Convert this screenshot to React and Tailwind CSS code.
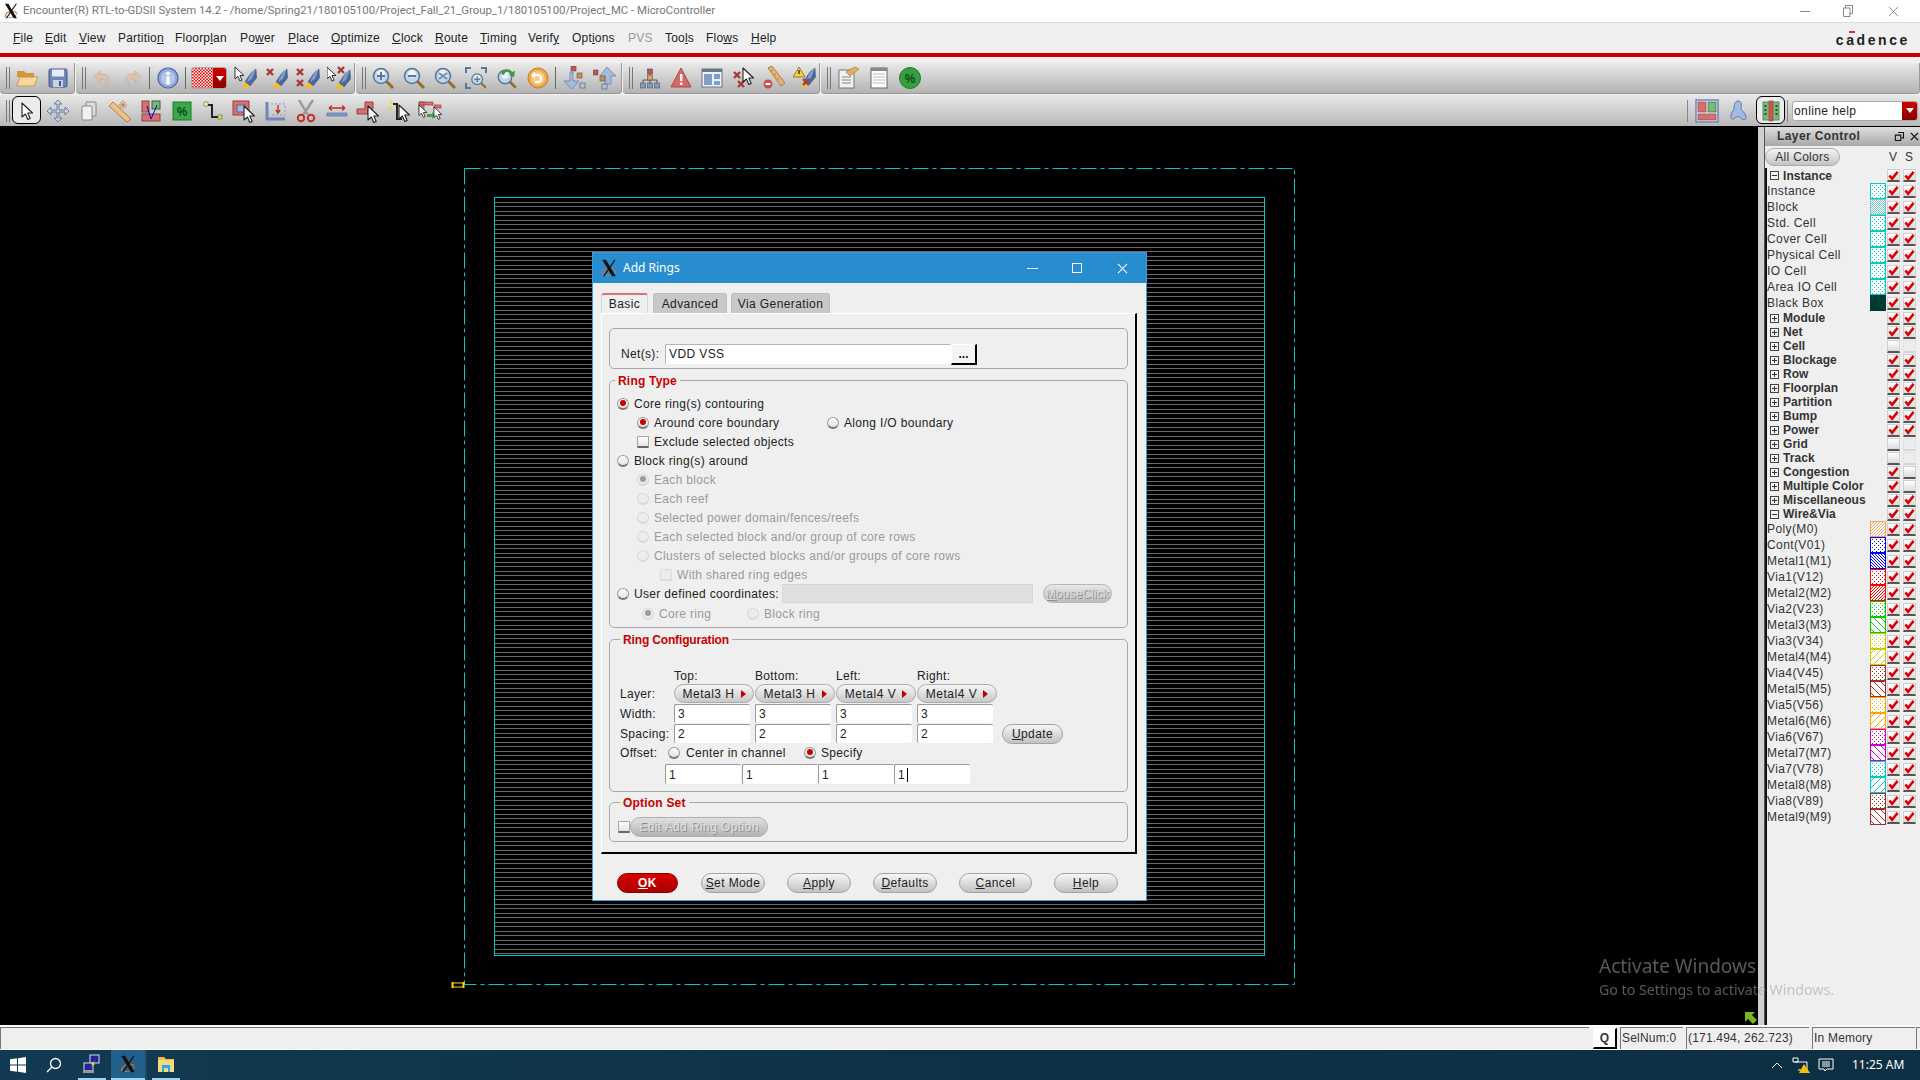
const Ic = ({ children, size = 'w-6 h-6' }) => (
  <svg viewBox="0 0 24 24" className={size}>{children}</svg>
);

const Arrow = ({ x = 0, y = 0, s = 1 }) => (
  <polygon
    transform={`translate(${x} ${y}) scale(${s})`}
    points="0,0 0,14 3.4,11 5.8,16.5 8.2,15.5 5.8,10 10.5,10"
    fill="#fff"
    stroke="#222"
    strokeWidth="1.1"
    strokeLinejoin="round"
  />
);

const Pen = ({ x = 0, y = 0 }) => (
  <g transform={`translate(${x} ${y})`}>
    <polygon points="14,0 14.500,9 8,17 3,13 9,4" fill="#4a6a9e" stroke="#2d4468" strokeWidth="0.5" />
    <polygon points="9,4 14,0 10,10 5,13" fill="#7f9ccb" />
    <polygon points="3,13 8,17 0,20" fill="#f4c20d" />
  </g>
);

const RedX = ({ x = 0, y = 0 }) => (
  <g transform={`translate(${x} ${y})`} stroke="#a83a3a" strokeWidth="2.4">
    <line x1="0" y1="0" x2="6" y2="6" />
    <line x1="6" y1="0" x2="0" y2="6" />
  </g>
);

const Glass = ({ sign }) => (
  <g>
    <line x1="15" y1="15" x2="22" y2="22" stroke="#9a6a2c" strokeWidth="3" />
    <circle cx="10" cy="10" r="7.5" fill="#c3d5e8" stroke="#5b7898" strokeWidth="1.6" />
    <circle cx="10" cy="8" r="4" fill="#edf3f9" />
    {sign === 'plus' && <path d="M6 10h8M10 6v8" stroke="#5b7898" strokeWidth="2" />}
    {sign === 'minus' && <path d="M6 10h8" stroke="#5b7898" strokeWidth="2" />}
    {sign === 'fit' && <path d="M6 7l8 6M14 7l-8 6" stroke="#6f8db0" strokeWidth="1.8" />}
  </g>
);

const Node = ({ x, y, c = '#d98c4a' }) => (
  <rect x={x} y={y} width="5" height="5" fill={c} stroke="#555" strokeWidth="0.6" />
);

const XLogo = ({ size = 'w-4 h-4' }) => (
  <svg viewBox="0 0 24 24" className={size}>
    <path d="M3 21C5 12 14 10 21 15" fill="none" stroke="#d4672a" strokeWidth="1.6" />
    <path d="M4 21C8 23 18 22 21 16" fill="none" stroke="#a88a5a" strokeWidth="1.2" />
    <polygon points="3,1 8,1 21,23 16,23" fill="#111" />
    <polygon points="19,1 21,1 6,23 4,23" fill="#111" />
  </svg>
);

const toolbarIcons = {
  folder: (
    <Ic>
      <path d="M2 5h7l2 2h8v4H2z" fill="#d8943c" />
      <polygon points="5,11 23,11 19,20 2,20" fill="#f6d79c" stroke="#c98b3a" strokeWidth="0.8" />
    </Ic>
  ),
  save: (
    <Ic>
      <rect x="3" y="3" width="18" height="18" rx="1.5" fill="#6f86b8" stroke="#3f5486" />
      <rect x="6" y="3.5" width="12" height="7" fill="#e7ebf3" />
      <rect x="7" y="14" width="10" height="7" fill="#c9d2e3" />
      <rect x="13" y="15" width="2" height="5" fill="#3f5486" />
    </Ic>
  ),
  undo: (
    <Ic>
      <path d="M9 8h3c4 0 6 2.500 6 6 0 2-1 4-3 6 .5-4-.5-7-4-7H9v4L3 10.500 9 5z" fill="#d9c4ae" stroke="#bfa78f" strokeWidth="0.6" />
    </Ic>
  ),
  redo: (
    <Ic>
      <path d="M15 8h-3c-4 0-6 2.500-6 6 0 2 1 4 3 6-.5-4 .5-7 4-7h2v4l6-6.500L15 5z" fill="#d9c4ae" stroke="#bfa78f" strokeWidth="0.6" />
    </Ic>
  ),
  info: (
    <Ic>
      <circle cx="12" cy="12" r="10" fill="#8ea8dc" stroke="#4a68a8" strokeWidth="1.2" />
      <circle cx="12" cy="12" r="7" fill="#b5c8ec" />
      <circle cx="12" cy="7.500" r="1.800" fill="#fff" />
      <rect x="10.500" y="10.500" width="3" height="8" fill="#fff" />
    </Ic>
  ),
  penArrow: (
    <Ic>
      <Arrow x={1} y={1} s={0.85} />
      <Pen x={8} y={3} />
    </Ic>
  ),
  penX: (
    <Ic>
      <RedX x={2} y={3} />
      <Pen x={8} y={3} />
    </Ic>
  ),
  penXX: (
    <Ic>
      <RedX x={1} y={3} />
      <RedX x={1} y={14} />
      <Pen x={9} y={3} />
    </Ic>
  ),
  penArrowX: (
    <Ic>
      <Arrow x={0} y={1} s={0.85} />
      <RedX x={11} y={1} />
      <Pen x={9} y={4} />
    </Ic>
  ),
  zoomIn: <Ic><Glass sign="plus" /></Ic>,
  zoomOut: <Ic><Glass sign="minus" /></Ic>,
  zoomFit: <Ic><Glass sign="fit" /></Ic>,
  zoomArea: (
    <Ic>
      <path d="M2 7V2h5M17 2h5v5M2 17v5h5" fill="none" stroke="#5b7898" strokeWidth="2" />
      <g transform="translate(6 6) scale(0.72)"><Glass sign="plus" /></g>
    </Ic>
  ),
  zoomBack: (
    <Ic>
      <g transform="translate(1 2) scale(0.9)"><Glass /></g>
      <path d="M6 8C8 2 15 2 17 6l3-1-1 6-5-2 2-1C14 5 10 5 9 9z" fill="#3f9a3f" />
    </Ic>
  ),
  refresh: (
    <Ic>
      <circle cx="12" cy="12" r="10" fill="#eda84a" stroke="#c47a1e" />
      <circle cx="12" cy="12" r="7" fill="#f6ca88" />
      <path d="M8 9h4c4 0 4 7 0 7H9" fill="none" stroke="#fff" strokeWidth="2" />
      <polygon points="9,5 9,13 5,9" fill="#fff" />
    </Ic>
  ),
  hierDown: (
    <Ic>
      <Node x={9} y={0} c="#c85050" />
      <Node x={15} y={7} />
      <polygon points="8,6 11,6 11,15 17,15 9.500,23 2,15 8,15" fill="#a4bbd9" stroke="#6a87ad" strokeWidth="0.8" />
      <Node x={18} y={17} c="#a8c4e4" />
    </Ic>
  ),
  hierUp: (
    <Ic>
      <Node x={0} y={4} c="#c85050" />
      <polygon points="14,1 23,10 18,10 18,18 12,18 12,10 7,10" fill="#a4bbd9" stroke="#6a87ad" strokeWidth="0.8" />
      <Node x={7} y={10} />
      <Node x={9} y={18} c="#a8c4e4" />
    </Ic>
  ),
  tree: (
    <Ic>
      <path d="M12 8v4M5 18v-4h14v4M12 14v4" fill="none" stroke="#555" />
      <Node x={9.500} y={3} c="#c85050" />
      <Node x={9.500} y={9} c="#e0a060" />
      <Node x={2.500} y={17} c="#7f9ccb" />
      <Node x={9.500} y={17} c="#7f9ccb" />
      <Node x={16.500} y={17} c="#7f9ccb" />
    </Ic>
  ),
  warnRed: (
    <Ic>
      <polygon points="12,2 22,21 2,21" fill="#d76868" stroke="#b04848" strokeLinejoin="round" />
      <rect x="11" y="8" width="2.400" height="7" fill="#fff" />
      <rect x="11" y="16.500" width="2.400" height="2.400" fill="#fff" />
    </Ic>
  ),
  layout: (
    <Ic>
      <rect x="2" y="3" width="20" height="18" fill="#eef1f6" stroke="#6a7788" />
      <rect x="2" y="3" width="20" height="3" fill="#6a7788" />
      <rect x="4" y="8" width="8" height="11" fill="#7f9ccb" />
      <rect x="14" y="8" width="6" height="5" fill="#7f9ccb" />
      <rect x="14" y="15" width="6" height="4" fill="#7f9ccb" />
    </Ic>
  ),
  arrowXX: (
    <Ic>
      <RedX x={3} y={6} />
      <RedX x={7} y={15} />
      <Arrow x={12} y={2} />
    </Ic>
  ),
  rulerStop: (
    <Ic>
      <polygon points="6,2 10,0 23,17 19,20" fill="#e3b378" stroke="#b87a3a" />
      <path d="M9 5l2-1M12 9l2-1M15 13l2-1" stroke="#b87a3a" />
      <circle cx="6" cy="18" r="4.500" fill="#c85050" />
      <rect x="3.500" y="17" width="5" height="2" fill="#fff" />
    </Ic>
  ),
  warnPen: (
    <Ic>
      <polygon points="6,1 12,11 0,11" fill="#f4d03f" stroke="#8a6d00" strokeWidth="0.8" />
      <rect x="5.400" y="4" width="1.300" height="4" fill="#222" />
      <Pen x={8} y={2} />
      <RedX x={10} y={13} />
    </Ic>
  ),
  noteEdit: (
    <Ic>
      <rect x="3" y="4" width="15" height="18" fill="#f1f1f1" stroke="#777" />
      <path d="M6 11h9M6 14h9M6 17h9" stroke="#888" />
      <polygon points="10,6 19,1 23,3 14,10" fill="#e0b060" stroke="#a87a30" strokeWidth="0.7" />
    </Ic>
  ),
  notepad: (
    <Ic>
      <rect x="4" y="2" width="16" height="20" fill="#fff" stroke="#666" />
      <rect x="4" y="2" width="16" height="3" fill="#888" />
      <path d="M6 8h12M6 11h12M6 14h12M6 17h12" stroke="#bbb" />
    </Ic>
  ),
  greenPct: (
    <Ic>
      <circle cx="12" cy="12" r="10.500" fill="#36a040" stroke="#217a2a" />
      <text x="12" y="16.500" textAnchor="middle" fontSize="12" fontWeight="700" fill="#0d4d14" fontFamily="Liberation Sans">%</text>
    </Ic>
  ),
  select: <Ic><Arrow x={7} y={4} /></Ic>,
  move: (
    <Ic>
      <path d="M12 1l4 4h-3v6h6V8l4 4-4 4v-3h-6v6h3l-4 4-4-4h3v-6H5v3l-4-4 4-4v3h6V5H8z" fill="#c6d5e6" stroke="#5b7898" strokeWidth="0.9" />
    </Ic>
  ),
  copy: (
    <Ic>
      <rect x="9" y="3" width="10" height="14" rx="1" fill="#ddd" stroke="#888" />
      <rect x="5" y="7" width="10" height="14" rx="1" fill="#f0f0f0" stroke="#888" />
    </Ic>
  ),
  ruler: (
    <Ic>
      <polygon points="1,7 5,3 23,20 19,23" fill="#ecc28f" stroke="#c07a35" />
      <path d="M15 1v9M10 6h9M12 3l6 6M18 3l-6 6" stroke="#c07a35" strokeWidth="0.8" />
    </Ic>
  ),
  redGreenV: (
    <Ic>
      <rect x="3" y="2" width="7" height="11" fill="#d87070" stroke="#904040" />
      <rect x="13" y="2" width="8" height="8" fill="#78b878" stroke="#306030" />
      <rect x="3" y="15" width="18" height="7" fill="#d87070" stroke="#904040" />
      <path d="M8 7l4 13 6-14" fill="none" stroke="#0000e0" strokeWidth="1" />
    </Ic>
  ),
  greenBox: (
    <Ic>
      <rect x="3" y="3" width="18" height="18" fill="#38a848" stroke="#1e7a2c" />
      <text x="12" y="16.500" textAnchor="middle" fontSize="12" fontWeight="700" fill="#0d4d14" fontFamily="Liberation Sans">%</text>
    </Ic>
  ),
  wire: (
    <Ic>
      <path d="M7 6h4v12h6" fill="none" stroke="#222" strokeWidth="2" />
      <rect x="3" y="3" width="4" height="4" fill="#f6f3a0" stroke="#666" strokeWidth="0.6" />
      <rect x="17" y="16" width="4" height="4" fill="#e6dc40" stroke="#666" strokeWidth="0.6" />
    </Ic>
  ),
  boxArrow: (
    <Ic>
      <rect x="1" y="2" width="16" height="14" fill="#d87070" stroke="#904040" />
      <rect x="5" y="6" width="8" height="7" fill="#a9b9d6" stroke="#4a68a8" />
      <Arrow x={12} y={7} />
    </Ic>
  ),
  corner: (
    <Ic>
      <path d="M4 3v17h18" fill="none" stroke="#6f86b8" strokeWidth="3" />
      <path d="M8 5h14v11H8" fill="none" stroke="#7f9ccb" strokeDasharray="2 2" />
      <path d="M15 6v8M13 11l2 3 2-3" stroke="#c03030" fill="none" strokeWidth="1.400" />
    </Ic>
  ),
  scissors: (
    <Ic>
      <path d="M5 1l9 15M19 1L9 16" stroke="#999" strokeWidth="2.400" />
      <circle cx="7" cy="19" r="3.200" fill="none" stroke="#c03030" strokeWidth="2" />
      <circle cx="17" cy="19" r="3.200" fill="none" stroke="#c03030" strokeWidth="2" />
    </Ic>
  ),
  spread: (
    <Ic>
      <path d="M4 9h16M4 9l3-2.500M4 9l3 2.500M20 9l-3-2.500M20 9l-3 2.500" fill="none" stroke="#c03030" strokeWidth="1.400" />
      <rect x="2" y="14" width="20" height="3" fill="#7f9ccb" stroke="#4a68a8" strokeWidth="0.6" />
    </Ic>
  ),
  shapeArrow: (
    <Ic>
      <path d="M1 10h8V3h8v7h-5v5H1z" fill="#d87070" stroke="#904040" />
      <Arrow x={12} y={7} />
    </Ic>
  ),
  wireArrow: (
    <Ic>
      <path d="M6 5h4v15h5" fill="none" stroke="#222" strokeWidth="2" />
      <rect x="3" y="2" width="3" height="3" fill="#e6dc40" />
      <rect x="2" y="8" width="3" height="3" fill="#e6dc40" />
      <Arrow x={12} y={6} />
    </Ic>
  ),
  copyArrow: (
    <Ic>
      <path d="M1 3h14v3H1zM1 3h5v9H1zM16 6h7v3h-7z" fill="#d87070" stroke="#904040" strokeWidth="0.7" />
      <Arrow x={1} y={6} s={0.75} />
      <path d="M9 15h5v-2l3 3.500-3 3.500v-2H9z" fill="#38a848" />
      <Arrow x={16} y={8} s={0.75} />
    </Ic>
  ),
  panelsRed: (
    <Ic>
      <rect x="1" y="1" width="22" height="22" fill="#dfe6f0" stroke="#6f86b8" strokeWidth="1.500" />
      <rect x="3" y="3" width="8" height="10" fill="#d87070" stroke="#904040" strokeWidth="0.6" />
      <rect x="13" y="3" width="8" height="10" fill="#78b878" stroke="#306030" strokeWidth="0.6" />
      <rect x="3" y="15" width="18" height="6" fill="#d87070" stroke="#904040" strokeWidth="0.6" />
    </Ic>
  ),
  blob: (
    <Ic>
      <path d="M12 2c3 0 4 3 3 6s5 6 5 10-4 3-5 1-4-2-6 0-5 1-4-3 3-4 3-7 1-7 4-7z" fill="#a4bbe0" stroke="#5b78a8" />
    </Ic>
  ),
  floorplan: (
    <Ic>
      <rect x="4" y="3" width="16" height="18" fill="#78b878" stroke="#5a8a5a" />
      <rect x="10" y="2" width="4" height="20" fill="#d85050" stroke="#904040" strokeWidth="0.6" />
      <path d="M6.500 6v12M17.500 6v12" stroke="#24502c" strokeDasharray="2 2" strokeWidth="2" />
    </Ic>
  ),
};

const Tool = ({ name, selected }) => (
  <div className="w-[31px] h-full flex items-center justify-center relative shrink-0">
    {selected && <div className="absolute left-[1px] right-[1px] top-[1px] bottom-[2px] bg-[#ececec] border border-black rounded-md" />}
    <div className="relative">{toolbarIcons[name]}</div>
  </div>
);

const Grip = () => (
  <div className="flex gap-[2px] h-[22px] w-[5px] shrink-0 ml-[6px]">
    <div className="w-[1px] h-full bg-[#777]" />
    <div className="w-[1px] h-full bg-[#777]" />
  </div>
);

const Sep = () => <div className="w-[1px] h-[22px] bg-[#666] mx-[2px] shrink-0" />;

const Group = ({ className, children }) => (
  <div className={`h-full flex items-center rounded-b-sm bg-gradient-to-b from-[#e9e9e9] to-[#b3b3b3] border-r border-b border-[#999] ${className}`}>
    {children}
  </div>
);

const Mn = ({ t, u, className = '' }) => (
  <span className={className}>
    {t.slice(0, u)}
    <span className="underline">{t[u]}</span>
    {t.slice(u + 1)}
  </span>
);

const menus = [
  ['File', 0, 'w-[32px]'],
  ['Edit', 0, 'w-[34px]'],
  ['View', 0, 'w-[39px]'],
  ['Partition', 8, 'w-[57px]'],
  ['Floorplan', 6, 'w-[65px]'],
  ['Power', 2, 'w-[48px]'],
  ['Place', 0, 'w-[43px]'],
  ['Optimize', 0, 'w-[61px]'],
  ['Clock', 0, 'w-[43px]'],
  ['Route', 0, 'w-[45px]'],
  ['Timing', 0, 'w-[48px]'],
  ['Verify', 5, 'w-[44px]'],
  ['Options', 3, 'w-[56px]'],
];

const Radio = ({ on, disabled }) => (
  <div className={`w-3 h-3 rounded-full shrink-0 flex items-center justify-center border-b-2 border ${disabled ? 'border-[#d8d8d8] bg-[#ececec]' : 'border-[#9a9a9a] bg-gradient-to-b from-[#fff] to-[#e2e2e2] border-b-[#777]'}`}>
    {on && <div className={`w-[6px] h-[6px] rounded-full ${disabled ? 'bg-[#9c9c9c]' : 'bg-[#c80000]'}`} />}
  </div>
);

const Check = ({ disabled }) => (
  <div className={`w-3 h-3 shrink-0 rounded-[1px] border border-b-2 ${disabled ? 'border-[#dcdcdc] bg-[#ececec]' : 'border-[#a8a8a8] border-b-[#666] bg-gradient-to-b from-[#fff] to-[#e4e4e4]'}`} />
);

const OptRow = ({ className = '', children }) => (
  <div className={`h-[19px] flex items-center ${className}`}>{children}</div>
);

const Label = ({ className = '', dim, children }) => (
  <span className={`tracking-[0.33px] whitespace-nowrap ${dim ? 'text-[#9a9a9a]' : 'text-[#222]'} ${className}`}>{children}</span>
);

const GroupBox = ({ title, titleClass = 'left-[9px]', className, children }) => (
  <div className={`relative border border-[#a9a9a9] rounded-[5px] ${className}`}>
    {title && (
      <div className={`absolute -top-[8px] px-[3px] bg-[#efefef] text-[#c80000] font-bold text-[12px] leading-[16px] whitespace-nowrap ${titleClass}`}>
        {title}
      </div>
    )}
    {children}
  </div>
);

const Field = ({ value, caret, className = '' }) => (
  <div className={`w-[76px] bg-white border-t border-l border-[#9a9a9a] rounded-[2px] pl-[3px] text-[12px] leading-[18px] text-[#222] flex items-center shrink-0 ${className}`}>
    {value}
    {caret && <div className="w-[1px] h-[14px] bg-black ml-[2px]" />}
  </div>
);

const Pill = ({ className = '', children }) => (
  <div className={`h-[20px] rounded-full border border-[#a4a4a4] bg-gradient-to-b from-[#f7f7f7] to-[#c2c2c2] flex items-center justify-center text-[12px] tracking-[0.4px] text-[#222] shrink-0 ${className}`}>
    {children}
  </div>
);

const LayerSelect = ({ label }) => (
  <div className="w-[80px] h-[19px] mr-[1px] rounded-full border border-[#aaa] bg-gradient-to-b from-[#f7f7f7] to-[#c8c8c8] flex items-center justify-center gap-[6px] text-[12px] tracking-[0.5px] text-[#222] shrink-0">
    <span>{label}</span>
    <div className="w-0 h-0 border-y-[4px] border-y-transparent border-l-[5px] border-l-[#c00000]" />
  </div>
);

const AddRings = () => (
  <div className="absolute left-[592px] top-[125px] w-[555px] h-[649px] bg-[#efefef] border border-[#3f9cdb] text-[12px] font-['Liberation_Sans',sans-serif] flex flex-col">
    <div className="h-[30px] bg-[#288dce] flex items-center pl-[7px] shrink-0">
      <XLogo size="w-[18px] h-[18px]" />
      <span className="ml-[5px] text-white text-[12px] font-['Noto_Sans',sans-serif] w-[403px]">Add Rings</span>
      <div className="w-[11px] h-[1px] bg-white ml-[1px]" />
      <div className="w-[10px] h-[10px] border border-white ml-[34px]" />
      <svg viewBox="0 0 12 12" className="w-[11px] h-[11px] ml-[35px]">
        <path d="M1 1l10 10M11 1L1 11" stroke="#fff" strokeWidth="1.100" />
      </svg>
    </div>
    <div className="flex pl-[8px] pt-[10px] h-[30px] shrink-0 items-end tracking-[0.4px] text-[#222]">
      <div className="w-[47px] h-[20px] bg-[#efefef] border-t-2 border-t-[#e07070] border-x border-x-[#d5d5d5] rounded-t-[3px] flex items-center justify-center">Basic</div>
      <div className="w-[74px] h-[20px] ml-[5px] bg-[#c8c8c8] border-t border-x border-[#bdbdbd] rounded-t-[3px] flex items-center justify-center">Advanced</div>
      <div className="w-[99px] h-[20px] ml-[4px] bg-[#c8c8c8] border-t border-x border-[#bdbdbd] rounded-t-[3px] flex items-center justify-center">Via Generation</div>
    </div>
    <div className="ml-[8px] w-[536px] h-[541px] shrink-0 border-l border-t border-white border-r-2 border-b-2 border-r-black border-b-black pl-[7px] pt-[14px]">
      <GroupBox className="w-[519px] h-[41px] pt-[15px] pl-[11px]">
        <div className="flex items-center h-[20px]">
          <Label className="w-[44px]">Net(s):</Label>
          <div className="w-[286px] h-[20px] bg-white border-t border-l border-[#b5b5b5] rounded-[2px] pl-[3px] leading-[18px] tracking-[0.4px] text-[#222]">VDD VSS</div>
          <div className="w-[26px] h-[21px] bg-[#f4f4f4] border-t border-l border-white border-r-2 border-b-2 border-r-black border-b-black flex items-center justify-center font-bold text-[#111] leading-none">...</div>
        </div>
      </GroupBox>
      <GroupBox title="Ring Type" titleClass="left-[5px] tracking-[0.2px]" className="w-[519px] h-[248px] mt-[11px] pt-[13px]">
        <OptRow className="pl-[7px] gap-[5px]"><Radio on /><Label>Core ring(s) contouring</Label></OptRow>
        <OptRow className="pl-[27px]">
          <div className="w-[190px] flex items-center gap-[5px]"><Radio on /><Label>Around core boundary</Label></div>
          <div className="flex items-center gap-[5px]"><Radio /><Label>Along I/O boundary</Label></div>
        </OptRow>
        <OptRow className="pl-[27px] gap-[5px]"><Check /><Label>Exclude selected objects</Label></OptRow>
        <OptRow className="pl-[7px] gap-[5px]"><Radio /><Label>Block ring(s) around</Label></OptRow>
        <OptRow className="pl-[27px] gap-[5px]"><Radio on disabled /><Label dim>Each block</Label></OptRow>
        <OptRow className="pl-[27px] gap-[5px]"><Radio disabled /><Label dim>Each reef</Label></OptRow>
        <OptRow className="pl-[27px] gap-[5px]"><Radio disabled /><Label dim>Selected power domain/fences/reefs</Label></OptRow>
        <OptRow className="pl-[27px] gap-[5px]"><Radio disabled /><Label dim>Each selected block and/or group of core rows</Label></OptRow>
        <OptRow className="pl-[27px] gap-[5px]"><Radio disabled /><Label dim>Clusters of selected blocks and/or groups of core rows</Label></OptRow>
        <OptRow className="pl-[50px] gap-[5px]"><Check disabled /><Label dim>With shared ring edges</Label></OptRow>
        <OptRow className="pl-[7px]">
          <Radio />
          <Label className="w-[147px] ml-[5px]">User defined coordinates:</Label>
          <div className="w-[251px] h-[19px] bg-[#e0e0e0] border border-[#d6d6d6] ml-[1px]" />
          <div className="w-[69px] h-[19px] ml-[10px] rounded-full border border-[#b8b8b8] bg-gradient-to-b from-[#e8e8e8] to-[#bcbcbc] flex items-center justify-center text-[#d8d8d8] [text-shadow:1px_1px_0_#8f8f8f] tracking-[0.1px]">
            <Mn t="MouseClick" u={0} />
          </div>
        </OptRow>
        <OptRow className="pl-[32px] mt-[1px]">
          <Radio on disabled />
          <Label dim className="ml-[5px] w-[88px]">Core ring</Label>
          <Radio disabled />
          <Label dim className="ml-[5px]">Block ring</Label>
        </OptRow>
      </GroupBox>
      <GroupBox title="Ring Configuration" titleClass="left-[10px] tracking-[-0.15px]" className="w-[519px] h-[153px] mt-[11px] pt-[28px] pl-[10px]">
        <div className="flex h-[16px] items-center">
          <div className="w-[54px]" />
          <Label className="w-[81px]">Top:</Label>
          <Label className="w-[81px]">Bottom:</Label>
          <Label className="w-[81px]">Left:</Label>
          <Label>Right:</Label>
        </div>
        <div className="flex h-[19px] items-center mb-[1px]">
          <Label className="w-[54px]">Layer:</Label>
          <LayerSelect label="Metal3 H" />
          <LayerSelect label="Metal3 H" />
          <LayerSelect label="Metal4 V" />
          <LayerSelect label="Metal4 V" />
        </div>
        <div className="flex h-[19px] items-center mb-[1px]">
          <Label className="w-[54px]">Width:</Label>
          <Field value="3" className="h-[19px] mr-[5px]" />
          <Field value="3" className="h-[19px] mr-[5px]" />
          <Field value="3" className="h-[19px] mr-[5px]" />
          <Field value="3" className="h-[19px]" />
        </div>
        <div className="flex h-[19px] items-center">
          <Label className="w-[54px]">Spacing:</Label>
          <Field value="2" className="h-[19px] mr-[5px]" />
          <Field value="2" className="h-[19px] mr-[5px]" />
          <Field value="2" className="h-[19px] mr-[5px]" />
          <Field value="2" className="h-[19px]" />
          <Pill className="w-[61px] h-[19px] ml-[9px]"><Mn t="Update" u={0} /></Pill>
        </div>
        <div className="flex h-[19px] items-center mb-[2px]">
          <Label className="w-[48px]">Offset:</Label>
          <Radio />
          <Label className="ml-[6px] w-[118px]">Center in channel</Label>
          <Radio on />
          <Label className="ml-[5px]">Specify</Label>
        </div>
        <div className="flex h-[20px] ml-[45px]">
          <Field value="1" className="h-[20px] mr-[1px]" />
          <Field value="1" className="h-[20px]" />
          <Field value="1" className="h-[20px]" />
          <Field value="1" caret className="h-[20px]" />
        </div>
      </GroupBox>
      <GroupBox title="Option Set" titleClass="left-[10px] tracking-[0.2px]" className="w-[519px] h-[40px] mt-[10px] pt-[14px] pl-[8px]">
        <div className="flex items-center">
          <Check />
          <div className="w-[138px] h-[20px] rounded-full border border-[#b0b0b0] bg-gradient-to-b from-[#e0e0e0] to-[#b4b4b4] flex items-center justify-center text-[#dedede] [text-shadow:1px_1px_0_#8f8f8f] tracking-[0.4px]">
            Edit Add Ring Option
          </div>
        </div>
      </GroupBox>
    </div>
    <div className="flex pl-[24px] mt-[19px]">
      <div className="w-[61px] h-[20px] rounded-full border border-[#8a0000] bg-gradient-to-b from-[#dc0000] to-[#a80000] flex items-center justify-center text-white font-bold tracking-[0.5px]"><Mn t="OK" u={0} /></div>
      <Pill className="w-[64px] ml-[23px]"><Mn t="Set Mode" u={0} /></Pill>
      <Pill className="w-[64px] ml-[22px]"><Mn t="Apply" u={0} /></Pill>
      <Pill className="w-[64px] ml-[22px]"><Mn t="Defaults" u={0} /></Pill>
      <Pill className="w-[73px] ml-[22px]"><Mn t="Cancel" u={0} /></Pill>
      <Pill className="w-[64px] ml-[22px]"><Mn t="Help" u={0} /></Pill>
    </div>
  </div>
);

const Swatch = ({ color, kind }) => {
  const cells = [];
  if (kind === 'dots') {
    for (let y = 2, r = 0; y < 15; y += 2, r++) {
      for (let x = r % 2 ? 4 : 2; x < 15; x += 4) cells.push(<rect key={`${x}-${y}`} x={x} y={y} width="1" height="1" fill={color} />);
    }
  }
  if (kind === 'dither') {
    for (let y = 1; y < 15; y += 1) {
      for (let x = 1 + (y % 2); x < 15; x += 2) cells.push(<rect key={`${x}-${y}`} x={x} y={y} width="1" height="1" fill="#7fc8c8" />);
    }
  }
  const lines = [];
  if (kind === 'fd' || kind === 'fs' || kind === 'bd' || kind === 'bs') {
    const back = kind[0] === 'b';
    const step = kind[1] === 'd' ? 3 : 7;
    for (let k = -16; k <= 32; k += step) {
      lines.push(
        back
          ? <line key={k} x1={k - 16} y1="0" x2={k} y2="16" stroke={color} />
          : <line key={k} x1={k} y1="0" x2={k - 16} y2="16" stroke={color} />
      );
    }
  }
  return (
    <svg viewBox="0 0 16 16" className="w-4 h-4 shrink-0">
      <rect width="16" height="16" fill="#fff" />
      {cells}
      {lines}
      <rect x="0.5" y="0.5" width="15" height="15" fill="none" stroke={color} />
    </svg>
  );
};

const LayerCheck = ({ state = 'on' }) => (
  <div className={`w-[13px] h-[13px] border-t border-x border-b-2 flex items-center justify-center ${state === 'dis' ? 'bg-[#ececec] border-[#e2e2e2] border-b-[#d5d5d5]' : 'bg-gradient-to-b from-[#fff] to-[#dcdcdc] border-[#d0d0d0] border-b-[#555]'}`}>
    {state === 'on' && (
      <svg viewBox="0 0 12 12" className="w-[11px] h-[11px] shrink-0">
        <path d="M1.500 6l3 3.500L10.500 2" fill="none" stroke="#d80000" strokeWidth="2.800" />
      </svg>
    )}
  </div>
);

const CheckCells = ({ v = 'on', s = 'on' }) => (
  <>
    <div className="w-[15px] flex justify-center shrink-0"><LayerCheck state={v} /></div>
    <div className="w-[16px] flex justify-center shrink-0"><LayerCheck state={s} /></div>
  </>
);

const Section = ({ name, open, v, s, className = 'h-[14px]' }) => (
  <div className={`flex items-center ${className}`}>
    <div className="w-[119px] flex items-center pl-[3px] gap-[4px] shrink-0">
      <div className="w-[9px] h-[9px] border border-[#444] relative shrink-0 bg-[#f4f4f4]">
        <div className="absolute left-[1px] right-[1px] top-[3px] h-[1px] bg-[#333]" />
        {!open && <div className="absolute top-[1px] bottom-[1px] left-[3px] w-[1px] bg-[#333]" />}
      </div>
      <span className="font-bold text-[12px] tracking-[0.05px] text-[#333] whitespace-nowrap">{name}</span>
    </div>
    <CheckCells v={v} s={s} />
  </div>
);

const LayerRow = ({ name, color, kind, solid }) => (
  <div className="flex items-center h-[16px]">
    <span className="w-[103px] text-[12px] tracking-[0.4px] text-[#333] whitespace-nowrap shrink-0">{name}</span>
    {solid ? <div className="w-4 h-4 bg-[#003a30] shrink-0" /> : <Swatch color={color} kind={kind} />}
    <CheckCells />
  </div>
);

const instanceRows = [
  ['Instance', '#00cccc', 'dots'],
  ['Block', '#7fc8c8', 'dither'],
  ['Std. Cell', '#00cccc', 'dots'],
  ['Cover Cell', '#00cccc', 'dots'],
  ['Physical Cell', '#00cccc', 'dots'],
  ['IO Cell', '#00cccc', 'dots'],
  ['Area IO Cell', '#00cccc', 'dots'],
];

const sections = [
  ['Module'], ['Net'], ['Cell', 'off', 'dis'], ['Blockage'], ['Row'], ['Floorplan'], ['Partition'],
  ['Bump'], ['Power'], ['Grid', 'off', 'dis'], ['Track', 'off', 'dis'], ['Congestion', 'on', 'off'],
  ['Multiple Color', 'on', 'off'], ['Miscellaneous'],
];

const wireRows = [
  ['Poly(M0)', '#f4a460', 'fd'],
  ['Cont(V01)', '#0000ff', 'dots'],
  ['Metal1(M1)', '#0000ff', 'bd'],
  ['Via1(V12)', '#ff0000', 'dots'],
  ['Metal2(M2)', '#ff0000', 'fd'],
  ['Via2(V23)', '#00cc00', 'dots'],
  ['Metal3(M3)', '#00cc00', 'bs'],
  ['Via3(V34)', '#cccc00', 'dots'],
  ['Metal4(M4)', '#cccc00', 'fs'],
  ['Via4(V45)', '#a52a2a', 'dots'],
  ['Metal5(M5)', '#a52a2a', 'bs'],
  ['Via5(V56)', '#ffa500', 'dots'],
  ['Metal6(M6)', '#ffa500', 'fs'],
  ['Via6(V67)', '#cc00cc', 'dots'],
  ['Metal7(M7)', '#cc00cc', 'bs'],
  ['Via7(V78)', '#00cccc', 'dots'],
  ['Metal8(M8)', '#00cccc', 'fs'],
  ['Via8(V89)', '#a52a2a', 'dots'],
  ['Metal9(M9)', '#a52a2a', 'bs'],
];

const LayerPanel = () => (
  <div className="w-[156px] shrink-0 bg-[#efefef] border-l border-[#555] flex flex-col font-['Liberation_Sans',sans-serif]">
    <div className="h-[19px] pb-[1px] bg-gradient-to-b from-[#dedede] to-[#a8a8a8] flex items-center pl-[12px] shrink-0">
      <span className="font-bold text-[12px] tracking-[0.4px] text-[#333] w-[119px]">Layer Control</span>
      <svg viewBox="0 0 12 12" className="w-[11px] h-[11px]">
        <path d="M4.500 1.500h6v6h-2M1.500 4.500h6v6h-6z" fill="none" stroke="#111" strokeWidth="1.200" />
      </svg>
      <svg viewBox="0 0 12 12" className="w-[11px] h-[11px] ml-[4px]">
        <path d="M2 2l8 8M10 2l-8 8" fill="none" stroke="#111" strokeWidth="1.500" />
      </svg>
    </div>
    <div className="flex h-[18px] mt-[2px] items-center shrink-0">
      <div className="w-[75px] h-[18px] rounded-full border border-[#aaa] bg-gradient-to-b from-[#f5f5f5] to-[#c4c4c4] flex items-center justify-center text-[12px] tracking-[0.3px] text-[#333]">All Colors</div>
      <span className="ml-[45px] w-[16px] text-center text-[12px] text-[#333]">V</span>
      <span className="w-[16px] text-center text-[12px] text-[#333]">S</span>
    </div>
    <div className="mt-[2px] border-l-2 border-[#111] flex-1">
      <Section name="Instance" open className="h-[15px]" />
      {instanceRows.map(([name, color, kind]) => (
        <LayerRow key={name} name={name} color={color} kind={kind} />
      ))}
      <LayerRow name="Black Box" solid />
      {sections.map(([name, v, s]) => (
        <Section key={name} name={name} v={v} s={s} />
      ))}
      <Section name="Wire&Via" open />
      {wireRows.map(([name, color, kind]) => (
        <LayerRow key={name} name={name} color={color} kind={kind} />
      ))}
    </div>
  </div>
);

const Canvas = () => (
  <svg className="absolute left-0 top-0 w-[1758px] h-[898px]" viewBox="0 0 1758 898">
    <defs>
      <pattern id="rows" width="9" height="9" y="75" patternUnits="userSpaceOnUse">
        <rect y="0" width="9" height="1" fill="#6a6a6a" />
        <rect y="4" width="9" height="1" fill="#6a6a6a" />
      </pattern>
    </defs>
    <rect x="494.500" y="70.500" width="770" height="758" fill="url(#rows)" stroke="#00c8c8" />
    <rect x="464.500" y="41.500" width="830" height="816" fill="none" stroke="#00c8c8" strokeDasharray="16 4 4 4" />
    <path d="M453 856h10M453 860h10" stroke="#ffd800" />
    <path d="M452.500 855v6M463.500 855v6" stroke="#ffd800" strokeWidth="2" />
    <polygon points="1745,885 1755,885 1755,895 1752,892 1747,897 1743,893 1748,888" fill="#7ab51d" transform="rotate(-90 1750 890)" />
  </svg>
);

const Taskbar = () => (
  <div className="h-[30px] shrink-0 flex items-center text-white bg-gradient-to-r from-[#123a52] via-[#0e3145] to-[#0c2f44] font-['Noto_Sans',sans-serif]">
    <div className="w-[36px] h-full flex items-center justify-center shrink-0">
      <svg viewBox="0 0 16 16" className="w-4 h-4">
        <polygon points="0,2.300 7,1.300 7,7.500 0,7.500" fill="#fff" />
        <polygon points="8,1.200 16,0 16,7.500 8,7.500" fill="#fff" />
        <polygon points="0,8.500 7,8.500 7,14.700 0,13.700" fill="#fff" />
        <polygon points="8,8.500 16,8.500 16,16 8,14.800" fill="#fff" />
      </svg>
    </div>
    <div className="w-[36px] h-full flex items-center justify-center shrink-0">
      <svg viewBox="0 0 16 16" className="w-4 h-4">
        <circle cx="9.500" cy="6.500" r="5" fill="none" stroke="#fff" strokeWidth="1.300" />
        <line x1="6" y1="10" x2="1" y2="15" stroke="#fff" strokeWidth="1.300" />
      </svg>
    </div>
    <div className="w-[28px] h-full ml-[6px] flex items-center justify-center border-b-2 border-[#9fd4f0] shrink-0">
      <svg viewBox="0 0 20 20" className="w-5 h-5">
        <rect x="8" y="1" width="9" height="8" fill="#2020a0" stroke="#ddd" />
        <rect x="2" y="9" width="9" height="8" fill="#2020a0" stroke="#ddd" />
        <rect x="1" y="16" width="11" height="3" fill="#999" />
        <polygon points="14,6 9,10 11,11 6,15 13,10 11,9" fill="#ffe600" />
      </svg>
    </div>
    <div className="w-[34px] h-full ml-[5px] flex items-center justify-center bg-[#20608a] border-b-2 border-[#9fd4f0] shrink-0">
      <XLogo size="w-[18px] h-[18px]" />
    </div>
    <div className="w-[2px] h-full bg-[#174a68] shrink-0" />
    <div className="w-[28px] h-full ml-[5px] flex items-center justify-center border-b-2 border-[#9fd4f0] shrink-0">
      <svg viewBox="0 0 20 20" className="w-5 h-5">
        <path d="M2 3h6l2 2h8v2H2z" fill="#e8c04c" />
        <rect x="2" y="6" width="16" height="12" fill="#f5d97a" />
        <rect x="6" y="11" width="8" height="7" fill="#29a8e8" />
        <rect x="8" y="14" width="4" height="4" fill="#f5d97a" />
      </svg>
    </div>
    <div className="flex-1" />
    <svg viewBox="0 0 12 8" className="w-[12px] h-[8px] mr-[9px]">
      <path d="M1 7l5-5 5 5" fill="none" stroke="#fff" strokeWidth="1" />
    </svg>
    <svg viewBox="0 0 18 16" className="w-[18px] h-4 mr-[8px]">
      <path d="M1 1h5v4H1zM3 5h12v8H6" fill="none" stroke="#fff" />
      <polygon points="12,7 18,16 7,16" fill="#f6c000" />
    </svg>
    <svg viewBox="0 0 16 16" className="w-4 h-4 mr-[18px]">
      <path d="M1 2h14v10H9l-2 2-1-2H1zM4 5h8M4 7h8M4 9h8" fill="none" stroke="#fff" />
    </svg>
    <span className="text-[12px] w-[48px] whitespace-nowrap mr-[20px]">11:25 AM</span>
  </div>
);

const App = () => (
  <div className="w-[1920px] h-[1080px] overflow-hidden flex flex-col bg-[#efefef] font-['Liberation_Sans',sans-serif]">
    <div className="h-[23px] shrink-0 bg-white border-b border-[#dcdcdc] flex items-center pl-[3px] relative">
      <XLogo />
      <span className="ml-[4px] text-[11.35px] text-[#777] font-['Roboto',sans-serif] whitespace-nowrap">
        Encounter(R) RTL-to-GDSII System 14.2 - /home/Spring21/180105100/Project_Fall_21_Group_1/180105100/Project_MC - MicroController
      </span>
      <div className="flex-1" />
      <div className="w-[10px] h-[1px] bg-[#888] mr-[33px]" />
      <svg viewBox="0 0 10 12" className="w-[10px] h-[12px] mr-[35px]">
        <path d="M2.500 3V.5h7v8H7M.5 3h6.500v8.500H.5z" fill="none" stroke="#888" />
      </svg>
      <svg viewBox="0 0 12 12" className="w-[11px] h-[11px] mr-[21px]">
        <path d="M1 1l10 10M11 1L1 11" stroke="#888" />
      </svg>
    </div>
    <div className="h-[30px] shrink-0 bg-[#f0f0f0] flex items-center pl-[13px] text-[12px] tracking-[0.2px] text-[#222] relative">
      {menus.map(([t, u, w]) => (
        <div key={t} className={w}><Mn t={t} u={u} /></div>
      ))}
      <div className="w-[37px] text-[#9a9a9a]">PVS</div>
      <div className="w-[41px]"><Mn t="Tools" u={3} /></div>
      <div className="w-[45px]"><Mn t="Flows" u={3} /></div>
      <div><Mn t="Help" u={0} /></div>
      <div className="flex-1" />
      <div className="relative mr-[10px] mt-[5px] font-bold text-[14px] tracking-[2.6px] text-[#222]">
        cadence
        <div className="absolute left-[13px] top-[1px] w-[6px] h-[2px] bg-[#d83030]" />
      </div>
    </div>
    <div className="h-[4px] shrink-0 bg-[#c80000]" />
    <div className="h-[6px] shrink-0 bg-[#f0f0f0]" />
    <div className="h-[31px] shrink-0 flex gap-[1px]">
      <Group className="w-[75px]">
        <Grip />
        <Tool name="folder" />
        <Tool name="save" />
      </Group>
      <Group className="w-[279px]">
        <Grip />
        <div className="-mr-[2px]"><Tool name="undo" /></div>
        <Tool name="redo" />
        <Sep />
        <Tool name="info" />
        <Sep />
        <div className="w-[36px] h-[22px] ml-[3px] mr-[3px] shrink-0 flex rounded-[3px] overflow-hidden border border-[#aaa]">
          <svg viewBox="0 0 20 20" className="w-[21px] h-full" preserveAspectRatio="none">
            <defs>
              <pattern id="chk" width="3" height="3" patternUnits="userSpaceOnUse">
                <rect width="3" height="3" fill="#fff" />
                <rect width="1.500" height="1.500" fill="#e00000" />
                <rect x="1.500" y="1.500" width="1.500" height="1.500" fill="#e00000" />
              </pattern>
            </defs>
            <rect width="20" height="20" fill="url(#chk)" />
          </svg>
          <div className="flex-1 bg-gradient-to-b from-[#d00000] to-[#8c0000] flex items-center justify-center">
            <div className="w-0 h-0 border-x-[4px] border-x-transparent border-t-[5px] border-t-white" />
          </div>
        </div>
        <Tool name="penArrow" />
        <Tool name="penX" />
        <Tool name="penXX" />
        <Tool name="penArrowX" />
      </Group>
      <Group className="w-[266px]">
        <Grip />
        <Tool name="zoomIn" />
        <Tool name="zoomOut" />
        <Tool name="zoomFit" />
        <Tool name="zoomArea" />
        <Tool name="zoomBack" />
        <Tool name="refresh" />
        <Sep />
        <Tool name="hierDown" />
        <Tool name="hierUp" />
      </Group>
      <Group className="w-[197px]">
        <Grip />
        <Tool name="tree" />
        <Tool name="warnRed" />
        <Tool name="layout" />
        <Tool name="arrowXX" />
        <Tool name="rulerStop" />
        <Tool name="warnPen" />
      </Group>
      <Group className="flex-1">
        <Grip />
        <Tool name="noteEdit" />
        <Tool name="notepad" />
        <Tool name="greenPct" />
      </Group>
    </div>
    <div className="h-[1px] shrink-0 bg-[#efefef]" />
    <div className="h-[32px] shrink-0 flex items-center bg-gradient-to-b from-[#e8e8e8] to-[#b8b8b8] border-b border-black">
      <Grip />
      {['select', 'move', 'copy', 'ruler', 'redGreenV', 'greenBox', 'wire', 'boxArrow', 'corner', 'scissors', 'spread', 'shapeArrow', 'wireArrow', 'copyArrow'].map((n, i) => (
        <Tool key={n} name={n} selected={i === 0} />
      ))}
      <div className="flex-1" />
      <div className="w-[1px] h-[22px] bg-[#888] mr-[3px]" />
      <Tool name="panelsRed" />
      <Tool name="blob" />
      <div className="ml-[2px] h-full"><Tool name="floorplan" selected /></div>
      <div className="w-[1px] h-[22px] bg-[#888] mr-[4px] ml-[1px]" />
      <div className="w-[126px] h-[20px] mr-[2px] flex rounded-[3px] overflow-hidden bg-white border border-[#aaa]">
        <span className="flex-1 pl-[1px] text-[12px] tracking-[0.4px] leading-[18px] text-[#222]">online help</span>
        <div className="w-[15px] bg-gradient-to-b from-[#d00000] to-[#8c0000] flex items-center justify-center">
          <div className="w-0 h-0 border-x-[4px] border-x-transparent border-t-[5px] border-t-white" />
        </div>
      </div>
    </div>
    <div className="h-[898px] shrink-0 flex relative">
      <div className="w-[1758px] shrink-0 bg-black relative">
        <Canvas />
        <AddRings />
      </div>
      <div className="w-[6px] shrink-0 bg-[#d0d0d0]" />
      <LayerPanel />
      <div className="absolute left-[1599px] top-[826px] pointer-events-none font-['Noto_Sans',sans-serif] text-[#a0a0a0] opacity-55 whitespace-nowrap">
        <div className="text-[19px] leading-[27px]">Activate Windows</div>
        <div className="text-[14.2px] leading-[20px]">Go to Settings to activate Windows.</div>
      </div>
    </div>
    <div className="h-[25px] shrink-0 bg-[#efefef] border-t-2 border-white border-b flex items-stretch text-[12px] tracking-[0.2px] text-[#333]">
      <div className="w-[1589px] border-l border-t border-[#777] shrink-0" />
      <div className="w-[24px] ml-[4px] mt-[1px] bg-white border-t border-l border-white border-r-2 border-b-2 border-r-black border-b-black flex items-center justify-center font-bold">Q</div>
      <div className="w-[63px] ml-[3px] border-l border-t border-[#777] pl-[1px] pb-[1px] flex items-center">SelNum:0</div>
      <div className="w-[123px] ml-[3px] border-l border-t border-[#777] pl-[1px] pb-[1px] flex items-center">(171.494, 262.723)</div>
      <div className="w-[103px] ml-[3px] border-l border-t border-[#777] pl-[1px] pb-[1px] flex items-center">In Memory</div>
      <div className="flex-1 ml-[1px] border-l border-t border-[#777]" />
    </div>
    <Taskbar />
  </div>
);

export default App;
